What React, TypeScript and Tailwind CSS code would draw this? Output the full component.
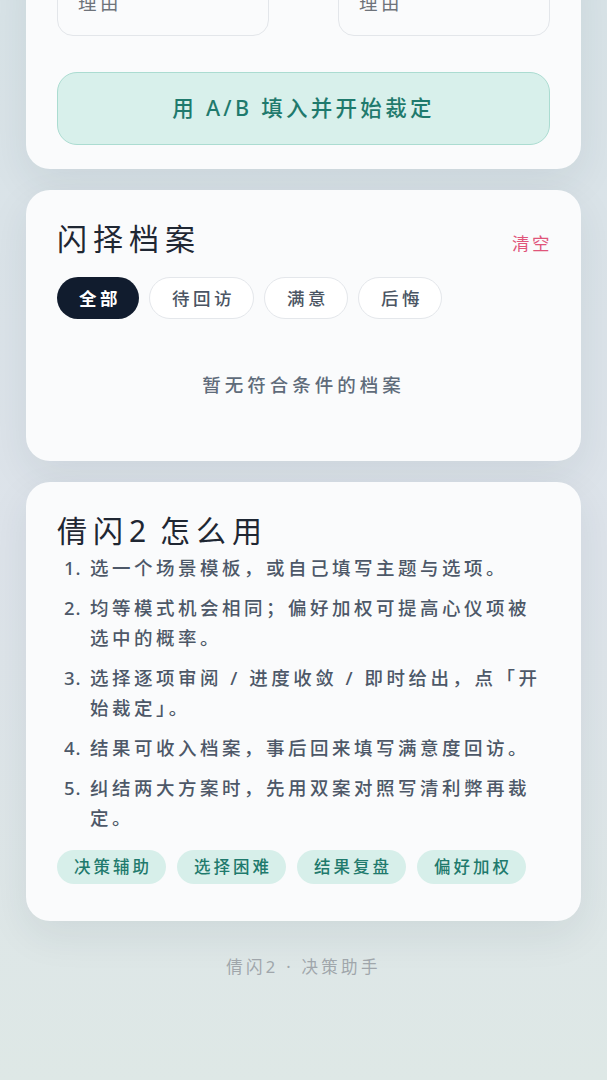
import React from "react";

const steps = [
  "选一个场景模板，或自己填写主题与选项。",
  "均等模式机会相同；偏好加权可提高心仪项被选中的概率。",
  "选择逐项审阅 / 进度收敛 / 即时给出，点「开始裁定」。",
  "结果可收入档案，事后回来填写满意度回访。",
  "纠结两大方案时，先用双案对照写清利弊再裁定。",
];

const tags = ["决策辅助", "选择困难", "结果复盘", "偏好加权"];
const filters = ["全部", "待回访", "满意", "后悔"];

export default function App() {
  return (
    <div className="min-h-[1080px] w-full overflow-hidden bg-gradient-to-b from-[#d8e3e7] via-[#dde3ea] to-[#dee8e6] font-['Noto_Sans','Noto_Sans_CJK_SC',sans-serif]">
      <div className="px-[26px] pb-[40px]">
        {/* Card 1 */}
        <div className="-mt-[50px] rounded-[24px] bg-[#fafbfc] px-[31px] pt-[30px] pb-[24px] shadow-[0_14px_40px_rgba(30,50,70,0.08)]">
          <div className="grid grid-cols-2 gap-[69px]">
            <textarea
              placeholder="理由"
              className="block h-[56px] w-full resize-none rounded-[16px] border border-[#e3e6ea] bg-[#fafbfc] px-[20px] pt-[8px] text-[18.5px] leading-[28px] tracking-[3.5px] text-[#374151] placeholder:text-[#6e737a] outline-none"
            />
            <textarea
              placeholder="理由"
              className="block h-[56px] w-full resize-none rounded-[16px] border border-[#e3e6ea] bg-[#fafbfc] px-[20px] pt-[8px] text-[18.5px] leading-[28px] tracking-[3.5px] text-[#374151] placeholder:text-[#6e737a] outline-none"
            />
          </div>
          <button className="mt-[36px] flex h-[73px] w-full items-center justify-center rounded-[20px] border border-[#abdcd1] bg-[#d8f0eb] text-[21.5px] font-medium tracking-[3.3px] text-[#1f7a6d]">
            用 A/B 填入并开始裁定
          </button>
        </div>

        {/* Card 2 */}
        <div className="mt-[21px] h-[271px] rounded-[24px] bg-[#fafbfc] px-[31px] pt-[29px] shadow-[0_14px_40px_rgba(30,50,70,0.08)]">
          <div className="flex items-center justify-between">
            <h2 className="text-[30px] leading-[40px] tracking-[6px] text-[#1f2733]">闪择档案</h2>
            <span className="-mr-[2px] mt-[8px] text-[17.5px] leading-[24px] tracking-[2.5px] text-[#e0557a]">清空</span>
          </div>
          <div className="mt-[18px] flex gap-[10px]">
            {filters.map((f, i) => (
              <span
                key={f}
                className={
                  i === 0
                    ? "flex h-[42px] items-center rounded-full bg-[#111c2e] pl-[22px] pr-[18px] text-[17.5px] font-bold tracking-[3.5px] text-white"
                    : "flex h-[42px] items-center rounded-full border border-[#e4e7eb] bg-white pl-[22px] pr-[18px] text-[17.5px] font-medium tracking-[3.5px] text-[#4b5563]"
                }
              >
                {f}
              </span>
            ))}
          </div>
          <p className="mt-[52px] text-center text-[18.5px] font-medium leading-[28px] tracking-[4px] text-[#5f6b7a]">
            暂无符合条件的档案
          </p>
        </div>

        {/* Card 3 */}
        <div className="mt-[21px] rounded-[24px] bg-[#fafbfc] px-[31px] pt-[29px] pb-[37px] shadow-[0_14px_40px_rgba(30,50,70,0.08)]">
          <h2 className="text-[30px] leading-[40px] tracking-[6px] text-[#1f2733]">
            倩闪<span className="tracking-normal">2</span> 怎么用
          </h2>
          <ol className="mt-[2px] flex flex-col gap-[10px]">
            {steps.map((s, i) => (
              <li key={i} className="flex text-[18.5px] font-medium leading-[30px] text-[#4d5868]">
                <span className="ml-[7px] w-[26px] shrink-0 tracking-[1px]">{i + 1}.</span>
                <span className="flex-1 tracking-[3.5px]">{s}</span>
              </li>
            ))}
          </ol>
          <div className="mt-[17px] flex gap-[11px]">
            {tags.map((t) => (
              <span
                key={t}
                className="flex h-[34px] items-center rounded-full bg-[#d7efea] pl-[17px] pr-[14px] text-[16.5px] font-medium tracking-[3px] text-[#1f7a6d]"
              >
                {t}
              </span>
            ))}
          </div>
        </div>

        <p className="mt-[34px] text-center text-[16.5px] leading-[24px] tracking-[3.3px] text-[#a0a6ab]">
          倩闪2 · 决策助手
        </p>
      </div>
    </div>
  );
}
